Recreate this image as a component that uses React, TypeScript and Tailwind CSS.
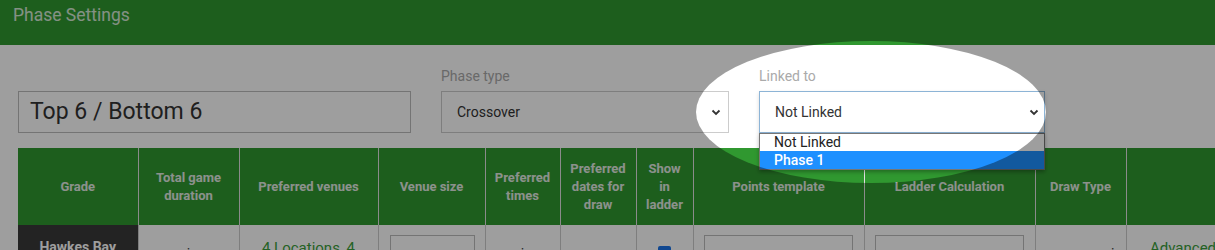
import React from 'react';

const HEADERS = [
  { label: 'Grade', w: 'w-[120px]' },
  { label: 'Total game duration', w: 'w-[101px]' },
  { label: 'Preferred venues', w: 'w-[139px]' },
  { label: 'Venue size', w: 'w-[107px]' },
  { label: 'Preferred times', w: 'w-[75px]' },
  { label: 'Preferred dates for draw', w: 'w-[76px]' },
  { label: 'Show in ladder', w: 'w-[57px]' },
  { label: 'Points template', w: 'w-[171px]' },
  { label: 'Ladder Calculation', w: 'w-[171px]' },
  { label: 'Draw Type', w: 'w-[91px]' },
  { label: '', w: 'w-[114px]' },
];

function Chevron() {
  return (
    <svg width="10" height="7" viewBox="0 0 10 7" className="shrink-0">
      <path d="M1.5 1.5 L5 5 L8.5 1.5" fill="none" stroke="#333" strokeWidth="1.8" />
    </svg>
  );
}

function Tick() {
  return <span className="block text-[14px] leading-none text-[#333]">i</span>;
}

export default function App() {
  return (
    <div className="relative h-[250px] w-[1215px] overflow-hidden bg-white font-['Roboto',sans-serif]">
      <div className="flex h-[45px] items-start bg-[#309830] px-[13px] pt-[4px]">
        <h2 className="text-[17.5px] leading-[22px] text-white/80">Phase Settings</h2>
      </div>

      <div className="flex items-end gap-[30px] px-[18px] pt-[22px]">
        <div className="w-[393px]">
          <div className="flex h-[42px] items-center border border-[#bbb] px-[11px] text-[23px] text-[#333]">
            Top 6 / Bottom 6
          </div>
        </div>
        <div className="w-[288px]">
          <p className="mb-[6px] text-[14px] leading-[18px] text-[#aaa]">Phase type</p>
          <div className="flex h-[42px] items-center justify-between border border-[#ccc] pl-[15px] pr-[7px] text-[14px] text-[#333]">
            Crossover
            <Chevron />
          </div>
        </div>
        <div className="relative w-[286px]">
          <p className="mb-[6px] text-[14px] leading-[18px] text-[#aaa]">Linked to</p>
          <div className="flex h-[42px] items-center justify-between border border-[#8db4d6] pl-[15px] pr-[5px] text-[14px] text-[#333] shadow-[0_2px_4px_rgba(0,0,0,0.15)]">
            Not Linked
            <Chevron />
          </div>
          <div className="absolute left-0 top-[66px] z-10 w-[286px] border border-[#767676] bg-white text-[14px] shadow-[0_2px_4px_rgba(0,0,0,0.3)]">
            <div className="h-[17px] pl-[14px] leading-[17px] text-[#222]">Not Linked</div>
            <div className="h-[18px] bg-[#1e90ff] pl-[14px] font-medium leading-[18px] text-white">Phase 1</div>
          </div>
        </div>
      </div>

      <div className="mt-[15px] pl-[18px]">
        <table className="w-[1222px] table-fixed border-collapse">
          <thead>
            <tr className="h-[77px] bg-[#309830]">
              {HEADERS.map((h, i) => (
                <th
                  key={i}
                  className={`${h.w} border-x border-[#e0e0e0] px-[8px] text-center text-[13px] font-bold leading-[18px] text-[#e3ebe3] first:border-l-0`}
                >
                  {h.label}
                </th>
              ))}
            </tr>
          </thead>
          <tbody>
            <tr className="h-[60px] align-top">
              <td className="bg-[#393939] pt-[13px] text-center text-[14px] font-bold leading-[18px] text-white">
                Hawkes Bay
              </td>
              <td className="border-x border-[#ccc] pt-[22px]">
                <div className="flex justify-center">
                  <Tick />
                </div>
              </td>
              <td className="border-x border-[#ccc] px-[8px] pt-[13px] text-center text-[15px] leading-[20px] text-[#3a9e3a]">
                4 Locations, 4 Courts
              </td>
              <td className="border-x border-[#ccc] pl-[11px] pt-[10px]">
                <div className="h-[30px] w-[85px] border border-[#bbb]" />
              </td>
              <td className="border-x border-[#ccc] pt-[22px]">
                <div className="flex justify-center">
                  <Tick />
                </div>
              </td>
              <td className="border-x border-[#ccc]" />
              <td className="border-x border-[#ccc] pt-[21px]">
                <div className="mx-auto h-[13px] w-[13px] rounded-[2px] bg-[#1a73e8]" />
              </td>
              <td className="border-x border-[#ccc] pl-[10px] pt-[10px]">
                <div className="h-[30px] w-[149px] border border-[#bbb]" />
              </td>
              <td className="border-x border-[#ccc] pl-[10px] pt-[10px]">
                <div className="h-[30px] w-[149px] border border-[#bbb]" />
              </td>
              <td className="border-x border-[#ccc] pr-[11px] pt-[22px]">
                <div className="flex justify-end">
                  <Tick />
                </div>
              </td>
              <td className="border-x border-[#ccc] pt-[13px] text-center text-[15px] leading-[20px] text-[#3a9e3a]">
                Advanced
              </td>
            </tr>
          </tbody>
        </table>
      </div>

      <div className="pointer-events-none absolute left-[696px] top-[41px] z-20 h-[142px] w-[350px] rounded-[50%] shadow-[0_0_0_2000px_rgba(0,0,0,0.38)]" />
    </div>
  );
}
